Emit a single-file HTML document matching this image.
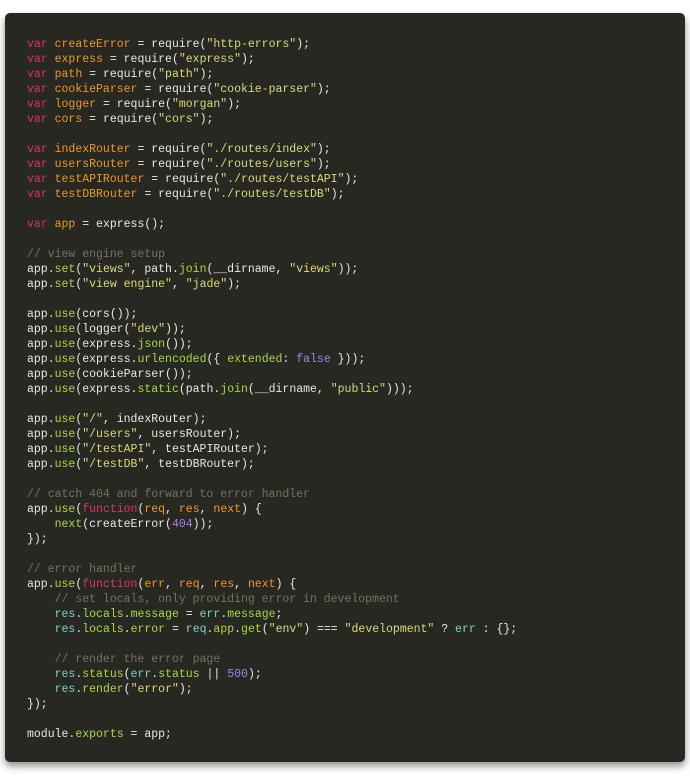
<!DOCTYPE html><html><head><style>
body{margin:0;background:#fff;width:690px;height:776px;overflow:hidden}
.box{position:absolute;left:5px;top:13px;width:680px;height:749px;background:#272822;border-radius:5px;box-shadow:0 4px 8px rgba(0,0,0,.45)}
pre{margin:0;position:absolute;left:22px;top:24px;font-family:"Liberation Mono",monospace;font-size:11.5px;line-height:15px;color:#e8e8e2}
.k{color:#d9336a}.v{color:#f0952a}.s{color:#dfd77a}.f{color:#a6d94a}.c{color:#75715e}.n{color:#9f85e6}.t{color:#7fcfcf}
</style></head><body><div class="box"><pre><span class="k">var</span> <span class="v">createError</span> = require(<span class="s">"http-errors"</span>);
<span class="k">var</span> <span class="v">express</span> = require(<span class="s">"express"</span>);
<span class="k">var</span> <span class="v">path</span> = require(<span class="s">"path"</span>);
<span class="k">var</span> <span class="v">cookieParser</span> = require(<span class="s">"cookie-parser"</span>);
<span class="k">var</span> <span class="v">logger</span> = require(<span class="s">"morgan"</span>);
<span class="k">var</span> <span class="v">cors</span> = require(<span class="s">"cors"</span>);

<span class="k">var</span> <span class="v">indexRouter</span> = require(<span class="s">"./routes/index"</span>);
<span class="k">var</span> <span class="v">usersRouter</span> = require(<span class="s">"./routes/users"</span>);
<span class="k">var</span> <span class="v">testAPIRouter</span> = require(<span class="s">"./routes/testAPI"</span>);
<span class="k">var</span> <span class="v">testDBRouter</span> = require(<span class="s">"./routes/testDB"</span>);

<span class="k">var</span> <span class="v">app</span> = express();

<span class="c">// view engine setup</span>
app.<span class="f">set</span>(<span class="s">"views"</span>, path.<span class="f">join</span>(__dirname, <span class="s">"views"</span>));
app.<span class="f">set</span>(<span class="s">"view engine"</span>, <span class="s">"jade"</span>);

app.<span class="f">use</span>(cors());
app.<span class="f">use</span>(logger(<span class="s">"dev"</span>));
app.<span class="f">use</span>(express.<span class="f">json</span>());
app.<span class="f">use</span>(express.<span class="f">urlencoded</span>({ <span class="f">extended</span>: <span class="n">false</span> }));
app.<span class="f">use</span>(cookieParser());
app.<span class="f">use</span>(express.<span class="f">static</span>(path.<span class="f">join</span>(__dirname, <span class="s">"public"</span>)));

app.<span class="f">use</span>(<span class="s">"/"</span>, indexRouter);
app.<span class="f">use</span>(<span class="s">"/users"</span>, usersRouter);
app.<span class="f">use</span>(<span class="s">"/testAPI"</span>, testAPIRouter);
app.<span class="f">use</span>(<span class="s">"/testDB"</span>, testDBRouter);

<span class="c">// catch 404 and forward to error handler</span>
app.<span class="f">use</span>(<span class="k">function</span>(<span class="v">req</span>, <span class="v">res</span>, <span class="v">next</span>) {
    <span class="f">next</span>(createError(<span class="n">404</span>));
});

<span class="c">// error handler</span>
app.<span class="f">use</span>(<span class="k">function</span>(<span class="v">err</span>, <span class="v">req</span>, <span class="v">res</span>, <span class="v">next</span>) {
    <span class="c">// set locals, only providing error in development</span>
    <span class="t">res</span>.<span class="f">locals</span>.<span class="f">message</span> = <span class="t">err</span>.<span class="f">message</span>;
    <span class="t">res</span>.<span class="f">locals</span>.<span class="f">error</span> = <span class="t">req</span>.<span class="f">app</span>.<span class="f">get</span>(<span class="s">"env"</span>) === <span class="s">"development"</span> ? <span class="t">err</span> : {};

    <span class="c">// render the error page</span>
    <span class="t">res</span>.<span class="f">status</span>(<span class="t">err</span>.<span class="f">status</span> || <span class="n">500</span>);
    <span class="t">res</span>.<span class="f">render</span>(<span class="s">"error"</span>);
});

module.<span class="f">exports</span> = app;</pre></div></body></html>
